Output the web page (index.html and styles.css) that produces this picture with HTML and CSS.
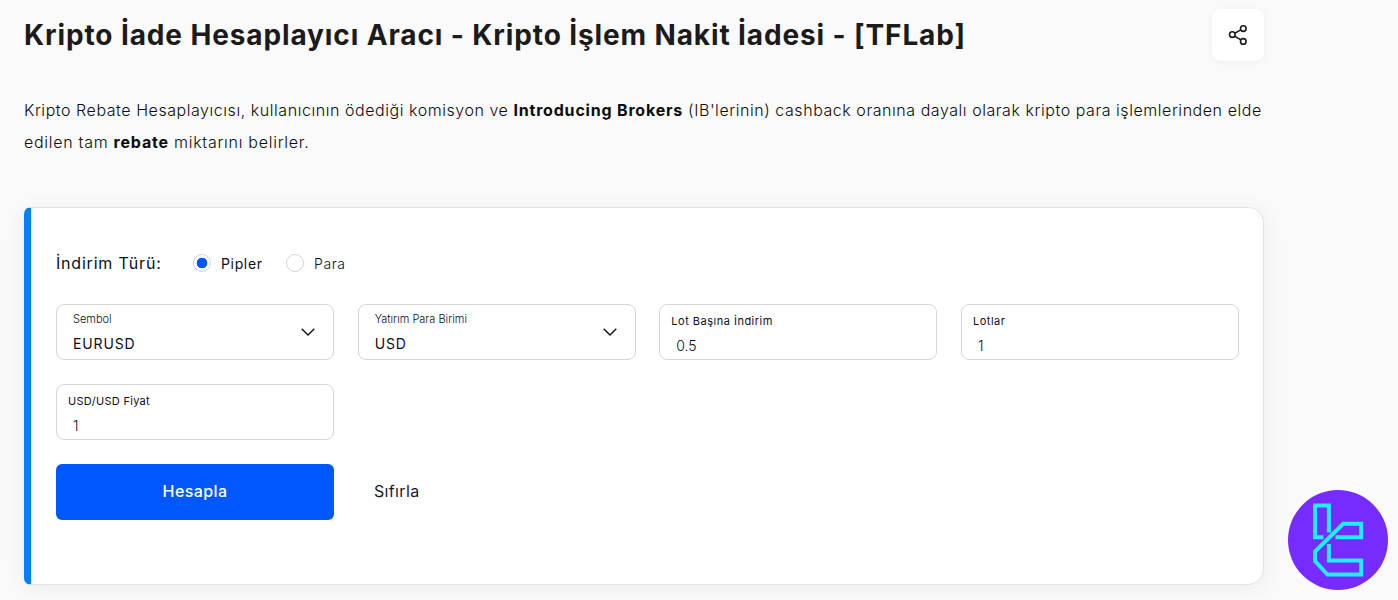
FILE: index.html
```html
<!DOCTYPE html>
<html lang="tr">
<head>
  <meta charset="UTF-8">
  <meta name="viewport" content="width=device-width, initial-scale=1.0">
  <title>Kripto İade Hesaplayıcı Aracı</title>
  <link rel="stylesheet" href="styles.css">
</head>
<body>
<main class="page">
  <header class="page-header">
    <h1 class="title">Kripto İade Hesaplayıcı Aracı - Kripto İşlem Nakit İadesi - [TFLab]</h1>
    <button class="share-btn" type="button">
      <svg width="20" height="22" viewBox="0 0 20 22" fill="none" stroke="#1b1b1b" stroke-width="1.6">
        <circle cx="4.3" cy="10.6" r="2.8"/>
        <circle cx="15.3" cy="4.6" r="2.8"/>
        <circle cx="15.3" cy="17.4" r="2.8"/>
        <path d="M6.8 9.2l6-3.3M6.7 12.2l6.2 3.7"/>
      </svg>
    </button>
  </header>

  <p class="intro">
    <span class="line">Kripto Rebate Hesaplayıcısı, kullanıcının ödediği komisyon ve <strong>Introducing Brokers</strong> (IB'lerinin) cashback oranına dayalı olarak kripto para işlemlerinden elde</span>
    <span class="line last">edilen tam <strong>rebate</strong> miktarını belirler.</span>
  </p>

  <form class="card">
    <div class="types">
      <span class="types-title">İndirim Türü:</span>
      <label class="type active"><input type="radio" name="type" checked><span>Pipler</span></label>
      <label class="type"><input type="radio" name="type"><span>Para</span></label>
    </div>

    <div class="fields">
      <div class="field select">
        <div class="select-text">
          <span class="select-label">Sembol</span>
          <span class="select-value">EURUSD</span>
        </div>
        <svg width="14" height="8" viewBox="0 0 14 8" fill="none" stroke="#111" stroke-width="1.4"><path d="M.7.7L7 6.9 13.3.7"/></svg>
      </div>
      <div class="field select">
        <div class="select-text">
          <span class="select-label">Yatırım Para Birimi</span>
          <span class="select-value">USD</span>
        </div>
        <svg width="14" height="8" viewBox="0 0 14 8" fill="none" stroke="#111" stroke-width="1.4"><path d="M.7.7L7 6.9 13.3.7"/></svg>
      </div>
      <label class="field number">
        <span class="number-label">Lot Başına İndirim</span>
        <input type="text" value="0.5">
      </label>
      <label class="field number">
        <span class="number-label">Lotlar</span>
        <input type="text" value="1">
      </label>
      <label class="field number">
        <span class="number-label price">USD/USD Fiyat</span>
        <input type="text" value="1">
      </label>
    </div>

    <div class="actions">
      <button class="calc-btn" type="button">Hesapla</button>
      <button class="reset-btn" type="reset">Sıfırla</button>
    </div>
  </form>
</main>

<div class="logo">
  <svg width="100" height="100" viewBox="0 0 100 100" fill="none" stroke="#1ff0ff" stroke-width="4">
    <path d="M40.9 42.5V15.4H27V47.2H35.5"/>
    <path d="M47.5 47.2H73.2V33.8H55.2L27 61.7V71L39.4 84.6H73.2V70.4H40.9V54"/>
  </svg>
</div>
</body>
</html>
```
FILE: styles.css
```css
* {
  box-sizing: border-box;
}

body {
  margin: 0;
  height: 600px;
  overflow: hidden;
  background: #fafafa;
  color: #1b1b1b;
  font-family: Inter, "Open Sans", sans-serif;
}

button, input {
  font-family: inherit;
  color: inherit;
}

.page {
  width: 1240px;
  margin-left: 24px;
  padding-top: 9px;
}

.page-header {
  display: flex;
  justify-content: space-between;
  align-items: center;
  height: 52px;
}

.title {
  margin: 0;
  font-size: 28px;
  font-weight: 700;
  letter-spacing: 0.88px;
  white-space: nowrap;
}

.share-btn {
  display: flex;
  justify-content: center;
  align-items: center;
  width: 52px;
  height: 52px;
  padding: 0;
  background: #fff;
  border: none;
  border-radius: 8px;
  box-shadow: 0 1px 5px rgba(0, 0, 0, 0.06);
}

.intro {
  margin: 33px 0 49px;
  color: #0c0c0c;
  font-size: 16px;
  font-weight: 300;
  letter-spacing: 0.55px;
  line-height: 32px;
}

.intro strong {
  font-weight: 700;
  letter-spacing: 0.8px;
}

.line {
  display: block;
  white-space: nowrap;
}

.line.last {
  letter-spacing: 0.72px;
}

.card {
  height: 378px;
  padding: 39px 24px 0 25px;
  background: #fff;
  border: 1px solid #e3e3e3;
  border-left: 7px solid #0080ff;
  border-radius: 7px 16px 16px 7px;
  box-shadow: 0 4px 24px rgba(0, 0, 0, 0.06);
}

.types {
  display: flex;
  align-items: center;
  height: 32px;
  margin-bottom: 25px;
  color: #0b0f1c;
}

.types-title {
  width: 137px;
  font-size: 16px;
  letter-spacing: 0.8px;
}

.type {
  display: flex;
  align-items: center;
  gap: 10px;
  width: 93px;
  font-size: 14px;
  font-weight: 300;
  letter-spacing: 0.6px;
}

.type.active {
  font-weight: 400;
  letter-spacing: 0.65px;
}

.type input {
  appearance: none;
  width: 18px;
  height: 18px;
  margin: 0;
  background: #fff;
  border: 1px solid #d5d5d5;
  border-radius: 50%;
}

.type input:checked {
  background: radial-gradient(circle, #0057ff 5px, #fff 5.6px);
}

.fields {
  display: grid;
  grid-template-columns: repeat(4, 278px);
  justify-content: space-between;
  row-gap: 24px;
}

.field {
  height: 56px;
  border: 1px solid #d6d6d6;
  border-radius: 8px;
  color: #0b0f1c;
}

.select {
  display: flex;
  justify-content: space-between;
  align-items: center;
  padding: 0 18px 0 16px;
}

.select-text {
  display: flex;
  flex-direction: column;
  padding-bottom: 1px;
}

.select-label {
  font-size: 11px;
  font-weight: 300;
  line-height: 24px;
}

.select-value {
  font-size: 14px;
  letter-spacing: 0.85px;
  line-height: 26px;
}

.number {
  display: flex;
  flex-direction: column;
  padding: 6px 11px 0;
}

.number-label {
  font-size: 11px;
  letter-spacing: 0.5px;
  line-height: 20px;
}

.number-label.price {
  letter-spacing: 0.3px;
}

.number input {
  width: 100%;
  height: 28px;
  padding: 0 5px;
  border: none;
  outline: none;
  background: none;
  font-size: 14px;
  font-weight: 300;
}

.actions {
  display: flex;
  gap: 24px;
  margin-top: 24px;
}

.calc-btn {
  width: 278px;
  height: 56px;
  padding: 0 0 2px;
  border: none;
  border-radius: 6px;
  background: #0057ff;
  color: #fff;
  font-size: 16px;
  font-weight: 500;
  letter-spacing: 0.4px;
}

.reset-btn {
  padding: 0 16px 2px;
  border: none;
  background: none;
  font-size: 16px;
  letter-spacing: 0.35px;
}

.logo {
  position: fixed;
  right: 10px;
  bottom: 10px;
  width: 100px;
  height: 100px;
  border-radius: 50%;
  background: #762cff;
}
```
